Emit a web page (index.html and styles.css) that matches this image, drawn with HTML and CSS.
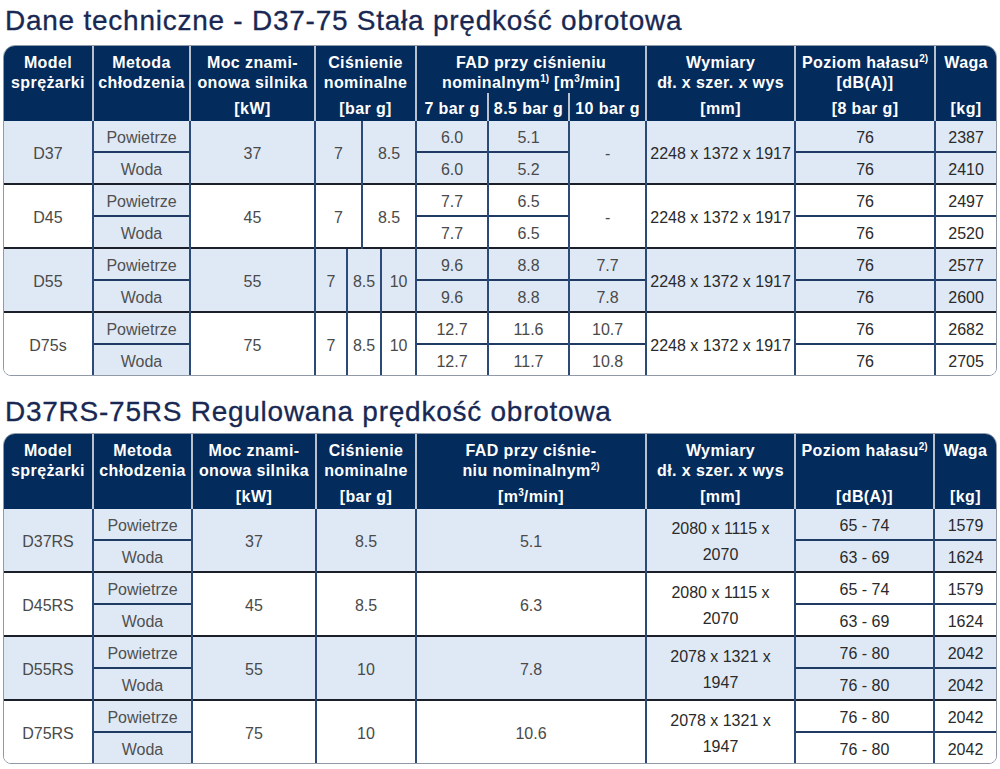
FILE: index.html
```html
<!DOCTYPE html>
<html lang="pl">
<head>
<meta charset="utf-8">
<title>Dane techniczne</title>
<link rel="stylesheet" href="styles.css">
</head>
<body>
<h1 class="title">Dane techniczne - D37-75 Stała prędkość obrotowa</h1>
<div class="tbl">
<table>
<colgroup>
<col style="width:89px"><col style="width:97px"><col style="width:125px">
<col style="width:32px"><col style="width:15px"><col style="width:19px"><col style="width:35px">
<col style="width:72px"><col style="width:81px"><col style="width:77px">
<col style="width:149px"><col style="width:140px"><col style="width:61px">
</colgroup>
<thead>
<tr class="h1">
<th rowspan="2" class="first"><div class="lbl">Model<br>sprężarki</div></th>
<th rowspan="2"><div class="lbl">Metoda<br>chłodzenia</div></th>
<th rowspan="2"><div class="lbl">Moc znami-<br>onowa silnika</div><div class="unit">[kW]</div></th>
<th rowspan="2" colspan="4"><div class="lbl">Ciśnienie<br>nominalne</div><div class="unit">[bar g]</div></th>
<th colspan="3" class="fad"><div class="lbl short">FAD przy ciśnieniu<br>nominalnym<sup>1)</sup> [m<sup>3</sup>/min]</div></th>
<th rowspan="2"><div class="lbl">Wymiary<br>dł. x szer. x wys</div><div class="unit">[mm]</div></th>
<th rowspan="2"><div class="lbl">Poziom hałasu<sup>2)</sup><br>[dB(A)]</div><div class="unit">[8 bar g]</div></th>
<th rowspan="2"><div class="lbl">Waga</div><div class="unit">[kg]</div></th>
</tr>
<tr class="h2">
<th class="sub">7 bar g</th>
<th class="sub">8.5 bar g</th>
<th class="sub">10 bar g</th>
</tr>
</thead>
<tbody>
<tr class="a light top">
<td rowspan="2" class="m">D37</td><td class="met">Powietrze</td><td rowspan="2">37</td>
<td rowspan="2" colspan="2">7</td><td rowspan="2" colspan="2">8.5</td>
<td>6.0</td><td>5.1</td><td rowspan="2">-</td>
<td rowspan="2" class="dk">2248 x 1372 x 1917</td><td class="dk">76</td><td class="dk">2387</td>
</tr>
<tr class="b light">
<td class="met">Woda</td><td>6.0</td><td>5.2</td><td class="dk">76</td><td class="dk">2410</td>
</tr>
<tr class="a">
<td rowspan="2" class="m">D45</td><td class="met">Powietrze</td><td rowspan="2">45</td>
<td rowspan="2" colspan="2">7</td><td rowspan="2" colspan="2">8.5</td>
<td>7.7</td><td>6.5</td><td rowspan="2">-</td>
<td rowspan="2" class="dk">2248 x 1372 x 1917</td><td class="dk">76</td><td class="dk">2497</td>
</tr>
<tr class="b">
<td class="met">Woda</td><td>7.7</td><td>6.5</td><td class="dk">76</td><td class="dk">2520</td>
</tr>
<tr class="a light">
<td rowspan="2" class="m">D55</td><td class="met">Powietrze</td><td rowspan="2">55</td>
<td rowspan="2">7</td><td rowspan="2" colspan="2">8.5</td><td rowspan="2">10</td>
<td>9.6</td><td>8.8</td><td>7.7</td>
<td rowspan="2" class="dk">2248 x 1372 x 1917</td><td class="dk">76</td><td class="dk">2577</td>
</tr>
<tr class="b light">
<td class="met">Woda</td><td>9.6</td><td>8.8</td><td>7.8</td><td class="dk">76</td><td class="dk">2600</td>
</tr>
<tr class="a">
<td rowspan="2" class="m">D75s</td><td class="met">Powietrze</td><td rowspan="2">75</td>
<td rowspan="2">7</td><td rowspan="2" colspan="2">8.5</td><td rowspan="2">10</td>
<td>12.7</td><td>11.6</td><td>10.7</td>
<td rowspan="2" class="dk">2248 x 1372 x 1917</td><td class="dk">76</td><td class="dk">2682</td>
</tr>
<tr class="b">
<td class="met">Woda</td><td>12.7</td><td>11.7</td><td>10.8</td><td class="dk">76</td><td class="dk">2705</td>
</tr>
</tbody>
</table>
</div>

<h1 class="title second">D37RS-75RS Regulowana prędkość obrotowa</h1>
<div class="tbl">
<table>
<colgroup>
<col style="width:89px"><col style="width:99px"><col style="width:124px"><col style="width:100px">
<col style="width:230px"><col style="width:149px"><col style="width:139px"><col style="width:62px">
</colgroup>
<thead>
<tr class="h0">
<th class="first"><div class="lbl">Model<br>sprężarki</div></th>
<th><div class="lbl">Metoda<br>chłodzenia</div></th>
<th><div class="lbl">Moc znami-<br>onowa silnika</div><div class="unit">[kW]</div></th>
<th><div class="lbl">Ciśnienie<br>nominalne</div><div class="unit">[bar g]</div></th>
<th><div class="lbl">FAD przy ciśnie-<br>niu nominalnym<sup>2)</sup></div><div class="unit">[m<sup>3</sup>/min]</div></th>
<th><div class="lbl">Wymiary<br>dł. x szer. x wys</div><div class="unit">[mm]</div></th>
<th><div class="lbl">Poziom hałasu<sup>2)</sup></div><div class="unit">[dB(A)]</div></th>
<th><div class="lbl">Waga</div><div class="unit">[kg]</div></th>
</tr>
</thead>
<tbody>
<tr class="a light top">
<td rowspan="2" class="m">D37RS</td><td class="met">Powietrze</td><td rowspan="2">37</td><td rowspan="2">8.5</td>
<td rowspan="2">5.1</td><td rowspan="2" class="dk dims">2080 x 1115 x<br>2070</td><td class="dk">65 - 74</td><td class="dk">1579</td>
</tr>
<tr class="b light">
<td class="met">Woda</td><td class="dk">63 - 69</td><td class="dk">1624</td>
</tr>
<tr class="a">
<td rowspan="2" class="m">D45RS</td><td class="met">Powietrze</td><td rowspan="2">45</td><td rowspan="2">8.5</td>
<td rowspan="2">6.3</td><td rowspan="2" class="dk dims">2080 x 1115 x<br>2070</td><td class="dk">65 - 74</td><td class="dk">1579</td>
</tr>
<tr class="b">
<td class="met">Woda</td><td class="dk">63 - 69</td><td class="dk">1624</td>
</tr>
<tr class="a light">
<td rowspan="2" class="m">D55RS</td><td class="met">Powietrze</td><td rowspan="2">55</td><td rowspan="2">10</td>
<td rowspan="2">7.8</td><td rowspan="2" class="dk dims">2078 x 1321 x<br>1947</td><td class="dk">76 - 80</td><td class="dk">2042</td>
</tr>
<tr class="b light">
<td class="met">Woda</td><td class="dk">76 - 80</td><td class="dk">2042</td>
</tr>
<tr class="a">
<td rowspan="2" class="m">D75RS</td><td class="met">Powietrze</td><td rowspan="2">75</td><td rowspan="2">10</td>
<td rowspan="2">10.6</td><td rowspan="2" class="dk dims">2078 x 1321 x<br>1947</td><td class="dk">76 - 80</td><td class="dk">2042</td>
</tr>
<tr class="b">
<td class="met">Woda</td><td class="dk">76 - 80</td><td class="dk">2042</td>
</tr>
</tbody>
</table>
</div>
</body>
</html>
```

FILE: styles.css
```css
body {
  margin: 0;
  background: #ffffff;
  font-family: "Liberation Sans", Arial, sans-serif;
}

.title {
  margin: 0;
  padding-left: 5px;
  height: 45px;
  line-height: 42px;
  font-size: 28px;
  font-weight: normal;
  letter-spacing: 0.75px;
  color: #182853;
  -webkit-text-stroke: 0.3px #182853;
}

.title.second {
  margin-top: 15px;
  height: 42px;
}

.tbl {
  margin-left: 3px;
  width: 994px;
  box-sizing: border-box;
  border: 1px solid #9099a8;
  border-radius: 12px 12px 8px 8px;
  overflow: hidden;
}

table {
  width: 100%;
  border-collapse: collapse;
  table-layout: fixed;
}

th {
  background: #032b5c;
  color: #ffffff;
  font-weight: bold;
  font-size: 16px;
  letter-spacing: 0.4px;
  padding: 0;
  vertical-align: top;
  text-align: center;
  border-left: 2px solid #b9c1cd;
  white-space: nowrap;
}

th.first {
  border-left: none;
}

.h1 th.fad {
  height: 47px;
}

.h2 th {
  height: 28px;
}

.h0 th {
  height: 75px;
}

.lbl {
  height: 53px;
  padding-top: 7px;
  box-sizing: border-box;
  line-height: 20px;
}

.lbl.short {
  height: auto;
}

.unit {
  line-height: 20px;
}

th.sub {
  vertical-align: bottom;
  line-height: 24px;
}

sup {
  font-size: 10px;
  line-height: 0;
  vertical-align: 6px;
  letter-spacing: 0;
}

td {
  height: 26px;
  padding: 4px 0 0 0;
  font-size: 16px;
  color: #4a4a4a;
  text-align: center;
  vertical-align: middle;
  border-left: 2px solid #2c4a78;
  background: #ffffff;
}

td.m {
  border-left: none;
}

tr.a td {
  border-top: 2px solid #1b1f2a;
}

tr.b td {
  border-top: 2px solid #1f3a63;
}

tr.top td {
  border-top: none;
}

tr.light td,
td.met {
  background: #dfe9f6;
}

td.met {
  color: #505050;
}

td.dk {
  color: #2a2a2a;
}

td.dims {
  line-height: 26px;
}
```
